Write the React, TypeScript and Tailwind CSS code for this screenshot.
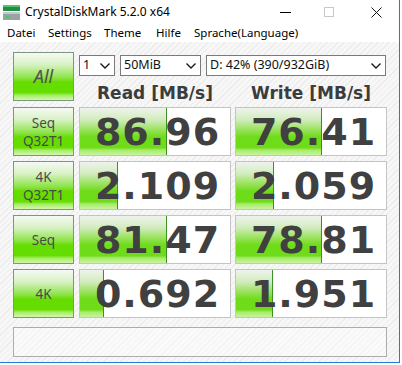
import React from 'react'

type Row = {
  top: string
  bottom?: string
  read: string
  write: string
  readFill: string
  writeFill: string
}

const ROWS: Row[] = [
  { top: 'Seq', bottom: 'Q32T1', read: '86.96', write: '76.41', readFill: 'w-[87px]', writeFill: 'w-[86px]' },
  { top: '4K', bottom: 'Q32T1', read: '2.109', write: '2.059', readFill: 'w-[38px]', writeFill: 'w-[38px]' },
  { top: 'Seq', read: '81.47', write: '78.81', readFill: 'w-[87px]', writeFill: 'w-[86px]' },
  { top: '4K', read: '0.692', write: '1.951', readFill: 'w-[24px]', writeFill: 'w-[37px]' },
]

const btnGreen =
  'bg-[linear-gradient(to_bottom,#f6f9f4_0%,#d8f2c4_25%,#8ee44a_52%,#66dd00_62%,#66dd00_84%,#a6ee66_90%,#d2f7ae_100%)]'
const barGreen =
  'bg-[linear-gradient(to_bottom,#eef3ec_0%,#d2ecbd_25%,#8fe04d_50%,#6edc18_62%,#6edc18_84%,#a8ec6c_90%,#c8f3a0_100%)]'

const Chevron = () => (
  <svg width="10" height="6" viewBox="0 0 10 6" className="shrink-0">
    <polyline points="0.5,0.5 5,5 9.5,0.5" fill="none" stroke="#1a1a1a" strokeWidth="1.4" />
  </svg>
)

const Select = ({ label, w }: { label: string; w: string }) => (
  <div
    className={`${w} flex h-[21px] items-center justify-between border border-[#7a7a7a] bg-white pl-[3px] pr-[4px] text-[12.5px] text-[#111]`}
  >
    <span>{label}</span>
    <Chevron />
  </div>
)

const ValueBox = ({ value, fill }: { value: string; fill: string }) => (
  <div className="relative flex h-[49px] w-[152px] items-center justify-center border border-[#c4c4c4] bg-white">
    <div className={`absolute left-0 top-0 h-full ${fill} ${barGreen} border-r border-[#3f8f24]`} />
    <span className="relative pl-[5px] font-['DejaVu_Sans',sans-serif] text-[38px] font-bold leading-none tracking-[1px] text-[#404040]">
      {value}
    </span>
  </div>
)

const Label = ({ top, bottom }: { top: string; bottom?: string }) => (
  <div
    className={`flex h-[49px] w-[61px] flex-col items-center justify-center border border-[#7d977d] ${btnGreen} text-[13.5px] leading-[18px] text-[#4a4a4a]`}
  >
    <span>{top}</span>
    {bottom && <span>{bottom}</span>}
  </div>
)

export default function App() {
  return (
    <div className="h-[365px] w-[402px] bg-white font-['Noto_Sans',sans-serif]">
      <div className="flex h-[363px] w-[400px] flex-col border-b border-r border-[#1c7fd6] bg-white">
        {/* title bar */}
        <div className="flex h-[24px] items-center">
          <svg width="18" height="16" viewBox="0 0 18 16" className="ml-[3px] mt-[2px]">
            <rect x="0" y="0" width="17" height="6" fill="#1f8f45" />
            <rect x="0" y="0" width="17" height="2" fill="#56c46f" />
            <rect x="0" y="7" width="17" height="8" fill="#9aa3a3" />
            <rect x="0" y="7" width="17" height="2" fill="#c4caca" />
            <rect x="3" y="11" width="3" height="2" fill="#3ad05a" />
          </svg>
          <span className="ml-[4px] text-[12px] text-black">CrystalDiskMark 5.2.0 x64</span>
          <div className="ml-auto flex items-center">
            <div className="mr-[33px] h-px w-[11px] bg-black" />
            <div className="mr-[37px] h-[10px] w-[10px] border border-[#c8c8c8]" />
            <svg width="11" height="11" viewBox="0 0 11 11" className="mr-[17px]">
              <path d="M0.5 0.5 L10.5 10.5 M10.5 0.5 L0.5 10.5" stroke="#111" strokeWidth="1" />
            </svg>
          </div>
        </div>
        {/* menu */}
        <div className="flex h-[18px] items-center pl-[7px] text-[11.5px] text-black">
          <span className="w-[41px]">Datei</span>
          <span className="w-[56px]">Settings</span>
          <span className="w-[52px]">Theme</span>
          <span className="w-[38px]">Hilfe</span>
          <span>Sprache(Language)</span>
        </div>
        {/* body */}
        <div className="flex-1 bg-[#f4f4f4] bg-[repeating-linear-gradient(135deg,#f7f7f7_0px,#f7f7f7_3px,#ececec_3px,#ececec_4px)] pl-[13px] pt-[10px]">
          <div className="flex gap-[5px]">
            <div
              className={`flex h-[49px] w-[61px] items-center justify-center border border-[#7d977d] ${btnGreen} text-[18px] italic text-[#505050]`}
            >
              All
            </div>
            <div className="flex flex-col">
              <div className="mt-[3px] flex gap-[5px]">
                <Select label="1" w="w-[36px]" />
                <Select label="50MiB" w="w-[81px]" />
                <Select label="D: 42% (390/932GiB)" w="w-[180px]" />
              </div>
              <div className="mt-[8px] flex gap-[4px] font-['DejaVu_Sans',sans-serif] text-[17px] font-bold leading-[18px] text-[#3c3c3c]">
                <div className="w-[152px] text-center">Read [MB/s]</div>
                <div className="w-[152px] text-center">Write [MB/s]</div>
              </div>
            </div>
          </div>
          <div className="mt-[5px] flex flex-col gap-[5px]">
            {ROWS.map((r, i) => (
              <div key={i} className="flex">
                <Label top={r.top} bottom={r.bottom} />
                <div className="ml-[5px]">
                  <ValueBox value={r.read} fill={r.readFill} />
                </div>
                <div className="ml-[4px]">
                  <ValueBox value={r.write} fill={r.writeFill} />
                </div>
              </div>
            ))}
          </div>
          <div className="mt-[9px] h-[30px] w-[374px] border border-[#acacac] bg-white/40" />
        </div>
      </div>
    </div>
  )
}
